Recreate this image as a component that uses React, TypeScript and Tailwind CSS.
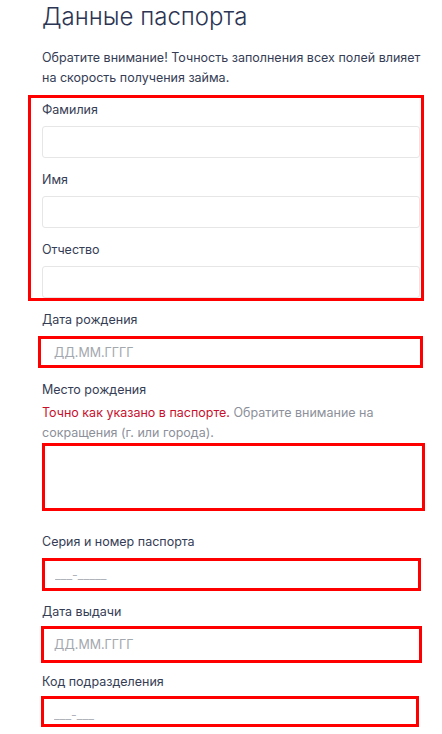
import React from "react";

const font = { fontFamily: "Inter, 'Noto Sans', sans-serif" };

function Label({ children }: { children: React.ReactNode }) {
  return <div className="text-[12.5px] leading-[20px] text-[#353d55]">{children}</div>;
}

function PlainInput() {
  return (
    <div className="mt-[6px] h-[32px] w-[378px] rounded-[3px] border border-[#e6e6e6] bg-white" />
  );
}

export default function App() {
  return (
    <div className="min-h-[734px] w-[442px] overflow-hidden bg-white" style={font}>
      <div className="pl-[42px] pt-[1px]">
        <h1 className="text-[24px] font-light leading-[32px] text-[#2c3553]">Данные паспорта</h1>
        <p className="mt-[15px] text-[12.5px] leading-[20px] text-[#353d55]">
          Обратите внимание! Точность заполнения всех полей влияет
          <br />
          на скорость получения займа.
        </p>
      </div>

      <div className="ml-[28px] mt-[7px] w-[396px] border-[3px] border-[#ff0000] pb-0 pl-[11px] pt-[2px]">
        <Label>Фамилия</Label>
        <PlainInput />
        <div className="mt-[12px]">
          <Label>Имя</Label>
        </div>
        <PlainInput />
        <div className="mt-[12px]">
          <Label>Отчество</Label>
        </div>
        <PlainInput />
      </div>

      <div className="pl-[42px]">
        <div className="mt-[9px]">
          <Label>Дата рождения</Label>
        </div>
        <input
          className="ml-[-4px] mt-[6px] block h-[32px] w-[385px] border-[3px] border-[#ff0000] bg-white pl-[13px] text-[12.5px] text-[#353d55] outline-none placeholder:text-[#a3a7ae]"
          placeholder="ДД.ММ.ГГГГ"
          style={font}
        />

        <div className="mt-[12px]">
          <Label>Место рождения</Label>
        </div>
        <div className="mt-[3px] text-[12.5px] leading-[20px] text-[#8c909a]">
          <span className="text-[#c8102e]">Точно как указано в паспорте.</span> Обратите внимание на
          <br />
          сокращения (г. или города).
        </div>
        <textarea
          className="block h-[68px] w-[383px] resize-none border-[3px] border-[#ff0000] bg-white outline-none"
          style={font}
        />

        <div className="mt-[21px]">
          <Label>Серия и номер паспорта</Label>
        </div>
        <input
          className="mt-[6px] block h-[33px] w-[379px] border-[3px] border-[#ff0000] bg-white pl-[10px] text-[12.5px] outline-none placeholder:text-[#b0b4ba]"
          placeholder="___-_____"
          style={font}
        />

        <div className="mt-[11px]">
          <Label>Дата выдачи</Label>
        </div>
        <input
          className="ml-[-1px] mt-[4px] block h-[37px] w-[381px] border-[3px] border-[#ff0000] bg-white pl-[10px] text-[12.5px] outline-none placeholder:text-[#a3a7ae]"
          placeholder="ДД.ММ.ГГГГ"
          style={font}
        />

        <div className="mt-[9px]">
          <Label>Код подразделения</Label>
        </div>
        <input
          className="ml-[-1px] mt-[4px] block h-[31px] w-[378px] border-[3px] border-[#ff0000] bg-white pl-[10px] pt-[6px] text-[12.5px] outline-none placeholder:text-[#b0b4ba]"
          placeholder="___-___"
          style={font}
        />
      </div>
    </div>
  );
}
